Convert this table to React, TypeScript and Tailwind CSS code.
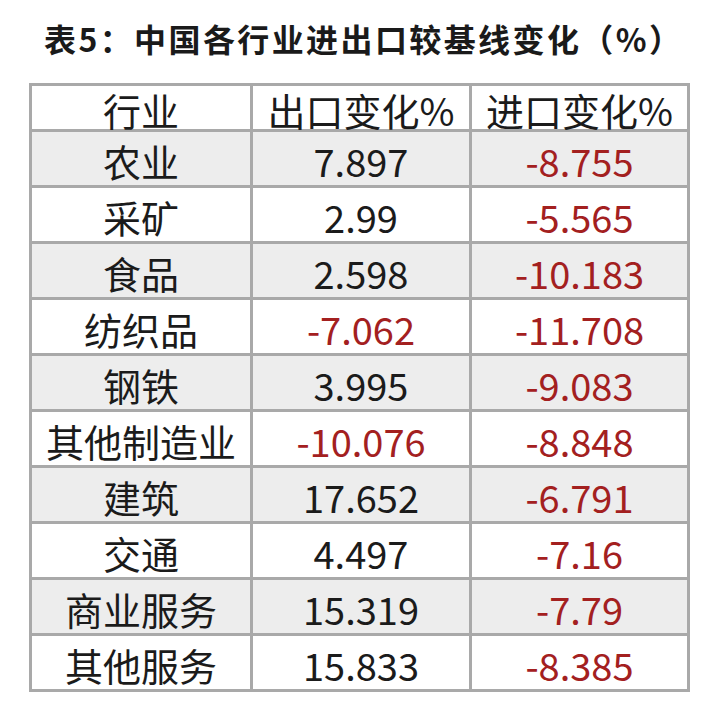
const rows: [string, string, string][] = [
  ["农业", "7.897", "-8.755"],
  ["采矿", "2.99", "-5.565"],
  ["食品", "2.598", "-10.183"],
  ["纺织品", "-7.062", "-11.708"],
  ["钢铁", "3.995", "-9.083"],
  ["其他制造业", "-10.076", "-8.848"],
  ["建筑", "17.652", "-6.791"],
  ["交通", "4.497", "-7.16"],
  ["商业服务", "15.319", "-7.79"],
  ["其他服务", "15.833", "-8.385"],
];

const font = { fontFamily: '"Noto Sans CJK SC", "Noto Sans", sans-serif' };

function Cell({ text, shade, header }: { text: string; shade: boolean; header?: boolean }) {
  const negative = text.startsWith("-");
  return (
    <div
      className={`flex items-center justify-center pt-[4px] text-[38px] leading-none ${
        header ? "h-[43px]" : "h-[53px]"
      } ${shade ? "bg-[#ededed]" : "bg-white"} ${negative ? "text-[#a3201f]" : "text-[#1b1b1b]"}`}
    >
      {text}
    </div>
  );
}

export default function App() {
  return (
    <div className="w-[714px] h-[712px] bg-white overflow-hidden" style={font}>
      <div className="pt-[18px] pl-[44px] h-[58px] text-[32px] leading-[40px] font-bold tracking-[2.4px] text-[#1a1a1a] whitespace-nowrap">
        表5：中国各行业进出口较基线变化（%）
      </div>
      <div className="mt-[25px] ml-[29px] w-[661px] grid grid-cols-[218px_216px_215px] gap-[3px] p-[3px] bg-[#a9a9a9]">
        <Cell text="行业" shade={false} header />
        <Cell text="出口变化%" shade={false} header />
        <Cell text="进口变化%" shade={false} header />
        {rows.map((r, i) =>
          r.map((t, j) => <Cell key={`${i}-${j}`} text={t} shade={i % 2 === 0} />)
        )}
      </div>
    </div>
  );
}
